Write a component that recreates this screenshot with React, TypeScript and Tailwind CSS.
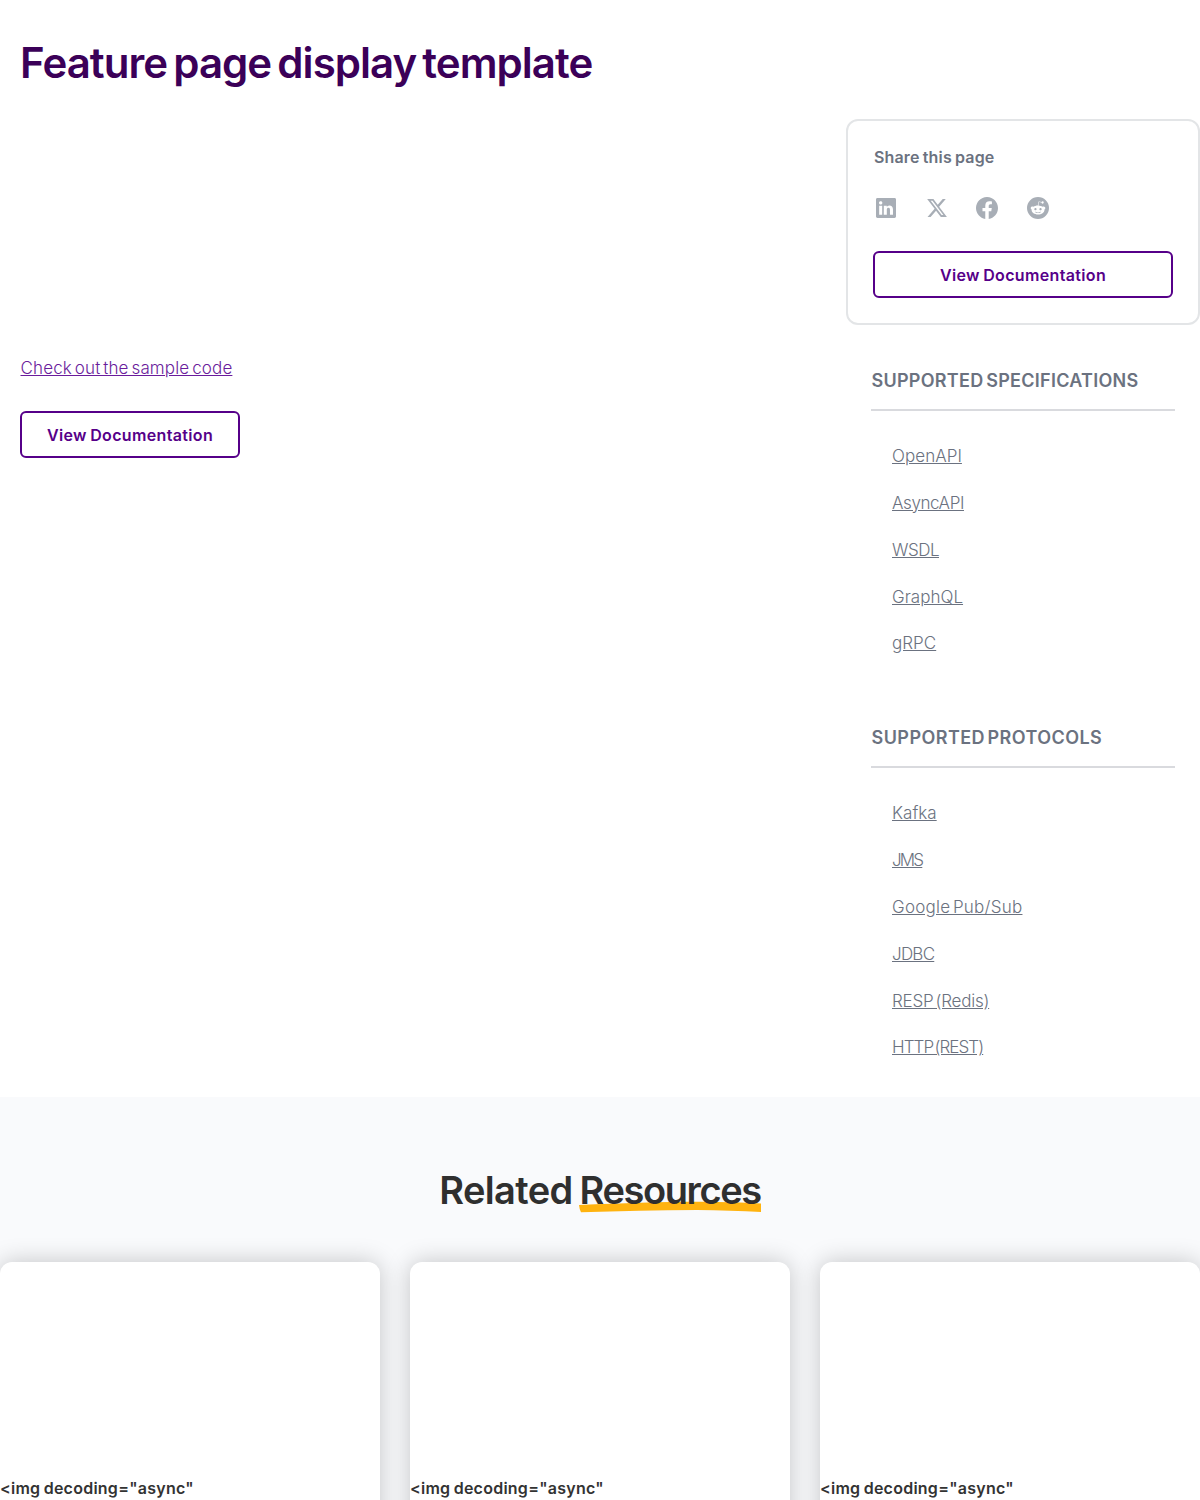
import { BsFacebook, BsLinkedin, BsReddit } from "react-icons/bs";
import { FaXTwitter } from "react-icons/fa6";

type Item = { label: string; tracking: string };

const specifications: Item[] = [
  { label: "OpenAPI", tracking: "tracking-[0.05px]" },
  { label: "AsyncAPI", tracking: "tracking-[-0.4px]" },
  { label: "WSDL", tracking: "tracking-[-0.5px]" },
  { label: "GraphQL", tracking: "tracking-[0.03px]" },
  { label: "gRPC", tracking: "tracking-[0.03px]" },
];

const protocols: Item[] = [
  { label: "Kafka", tracking: "tracking-[0.03px]" },
  { label: "JMS", tracking: "tracking-[-1.8px]" },
  { label: "Google Pub/Sub", tracking: "tracking-[0.25px]" },
  { label: "JDBC", tracking: "tracking-[-0.75px]" },
  { label: "RESP (Redis)", tracking: "tracking-[-0.22px]" },
  { label: "HTTP (REST)", tracking: "tracking-[-0.93px]" },
];

function LinkList({
  title,
  titleClass,
  items,
  className,
}: {
  title: string;
  titleClass: string;
  items: Item[];
  className: string;
}) {
  return (
    <section className={className}>
      <h3 className={`pl-[0.5px] text-lg leading-7 font-semibold whitespace-nowrap text-[#6b7280] ${titleClass}`}>
        {title}
      </h3>
      <ul className="mt-[14px] flex flex-col gap-[18.8px] border-t-2 border-[#d9dade] pt-[31.3px] pl-[21px] text-[17px] font-light text-[#6b7280]">
        {items.map(({ label, tracking }) => (
          <li key={label} className="leading-7">
            <a className={`underline underline-offset-1 [word-spacing:-2.5px] ${tracking}`}>{label}</a>
          </li>
        ))}
      </ul>
    </section>
  );
}

function DocumentationButton({ className }: { className: string }) {
  return (
    <button
      className={`block h-[47px] rounded-md border-2 border-[#560089] font-semibold tracking-[0.35px] text-[#560089] [word-spacing:-1px] ${className}`}
    >
      View Documentation
    </button>
  );
}

export default function App() {
  return (
    <div className="h-[1500px] w-[1200px] overflow-hidden bg-white font-['Inter',sans-serif]">
      <main className="h-[1097px]">
        <h1 className="pt-9 pl-5 text-[42px] leading-[54px] font-semibold tracking-[-0.96px] text-[#3b0058] [word-spacing:-3.5px]">
          Feature page display template
        </h1>
        <div className="mt-[29px] flex justify-between">
          <div className="pt-[235px] pl-5">
            <a className="ml-[0.5px] block w-fit text-[17px] leading-7 font-light tracking-[0.13px] text-[#6a1c9c] underline underline-offset-1 [word-spacing:-2px]">
              Check out the sample code
            </a>
            <DocumentationButton className="mt-[29px] w-[220px]" />
          </div>
          <aside className="w-[354px]">
            <div className="h-[206px] rounded-xl border-2 border-[#e3e5e7] px-[25px] pt-[24px]">
              <p className="pl-px leading-6 font-semibold tracking-[0.15px] text-[#6b7280] [word-spacing:-1px]">
                Share this page
              </p>
              <div className="mt-[27px] flex gap-[26.5px] pl-px text-[#a8aeb6]">
                <span className="flex size-6 items-center justify-center">
                  <BsLinkedin size={20} />
                </span>
                <span className="flex size-6 items-center justify-center">
                  <FaXTwitter size={22} />
                </span>
                <span className="flex size-6 items-center justify-center">
                  <BsFacebook size={22} />
                </span>
                <span className="flex size-6 items-center justify-center">
                  <BsReddit size={22} />
                </span>
              </div>
              <DocumentationButton className="mt-[31px] w-full" />
            </div>
            <LinkList
              className="mx-[25px] mt-[42px]"
              title="SUPPORTED SPECIFICATIONS"
              titleClass="tracking-[0.27px] [word-spacing:-2px]"
              items={specifications}
            />
            <LinkList
              className="mx-[25px] mt-[66.7px]"
              title="SUPPORTED PROTOCOLS"
              titleClass="tracking-[0.44px] [word-spacing:-2.5px]"
              items={protocols}
            />
          </aside>
        </div>
      </main>
      <section className="h-[403px] bg-[#f9fafc] pt-[68px]">
        <h2 className="text-center text-[38px] leading-[50px] font-semibold text-[#2f2f2f]">
          <span className="tracking-[-0.65px] [word-spacing:-2px]">Related </span>
          <span className="relative isolate inline-block tracking-[-1.4px]">
            Resources
            <svg
              className="absolute top-[36px] left-0 -z-10 h-3 w-[182px]"
              viewBox="0 0 183 12"
              fill="#ffb30f"
              preserveAspectRatio="none"
              aria-hidden="true"
            >
              <path d="M0 4C45 2.300 80 .8 122 .8c22 0 42 .8 61 1.800v8.400c-20-1-42-2-64-2-40 0-78 1.200-117 2.200Q.5 8.600 0 4Z" />
            </svg>
          </span>
        </h2>
        <div className="mt-[47px] grid grid-cols-3 gap-[30px]">
          {[0, 1, 2].map((i) => (
            <article key={i} className="h-[400px] rounded-xl bg-white pt-[214px] shadow-[0_0_24px_rgba(0,0,0,0.22)]">
              <p className="leading-6 font-semibold tracking-[0.25px] text-[#333] [word-spacing:-1px]">
                {'<img decoding="async"'}
              </p>
            </article>
          ))}
        </div>
      </section>
    </div>
  );
}
